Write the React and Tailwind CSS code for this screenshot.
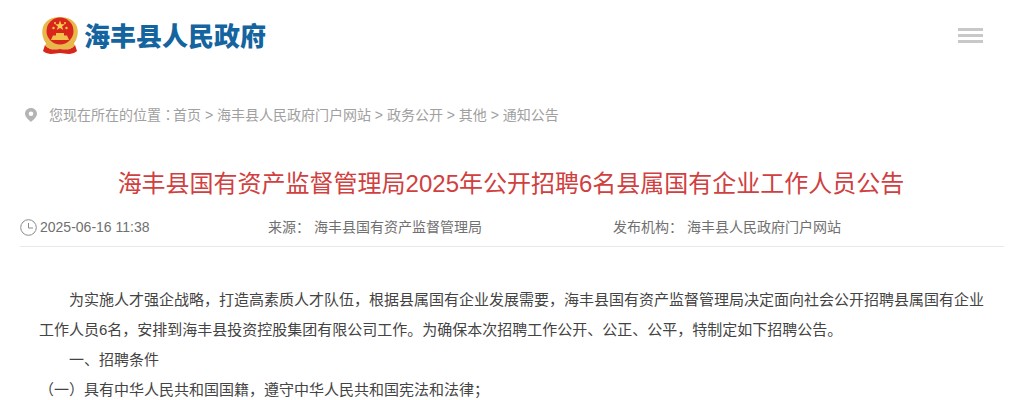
import React from "react";

const cjk = '"Liberation Sans", "Noto Sans CJK SC", sans-serif';

const Emblem = () => (
  <svg width="36" height="40" viewBox="0 0 36 40" className="shrink-0">
    <path d="M7 31 C1 25 -1 18 1 11 C3 5 9 1 18 1 C27 1 33 5 35 11 C37 18 35 25 29 31 Z" fill="#e8b84a" />
    <circle cx="18" cy="15" r="13.5" fill="#d8261c" />
    <path d="M18 4.5 L19.3 8.2 L23 8.2 L20 10.5 L21.2 14 L18 11.9 L14.8 14 L16 10.5 L13 8.2 L16.7 8.2 Z" fill="#f6d04d" />
    <circle cx="11.5" cy="12" r="1.2" fill="#f6d04d" />
    <circle cx="24.5" cy="12" r="1.2" fill="#f6d04d" />
    <circle cx="13" cy="7" r="1" fill="#f6d04d" />
    <circle cx="23" cy="7" r="1" fill="#f6d04d" />
    <path d="M9 24 L11 19.5 H14 V17 H22 V19.5 H25 L27 24 Z" fill="#f0c24a" />
    <path d="M3 29 C8 35 13 33 18 33 C23 33 28 35 33 29 L35 35 C29 40 23 37 18 37 C13 37 7 40 1 35 Z" fill="#d8261c" />
    <path d="M5 27 C9 32 14 30.5 18 30.5 C22 30.5 27 32 31 27 L33 29 C28 35 23 33 18 33 C13 33 8 35 3 29 Z" fill="#e8b84a" />
  </svg>
);

const PinIcon = () => (
  <svg width="12" height="14" viewBox="0 0 12 14" className="shrink-0">
    <path fillRule="evenodd" d="M6 0 C9.4 0 12 2.5 12 5.6 C12 9 8.5 11.8 6 14 C3.5 11.8 0 9 0 5.6 C0 2.5 2.6 0 6 0 Z M6 3.4 A2.3 2.3 0 1 0 6 8 A2.3 2.3 0 1 0 6 3.4 Z" fill="#b4b4b4" />
  </svg>
);

const ClockIcon = () => (
  <svg width="17" height="17" viewBox="0 0 17 17" fill="none" stroke="#8a8a8a" strokeWidth="1" className="shrink-0">
    <circle cx="8.5" cy="8.5" r="7.8" />
    <path d="M8.5 4 V9 H13" />
  </svg>
);

export default function App() {
  return (
    <div className="w-[1024px] h-[400px] overflow-hidden bg-white" style={{ fontFamily: cjk }}>
      {/* Header */}
      <div className="flex items-center justify-between h-[72px] pl-[42px] pr-[41px]">
        <div className="flex items-center gap-[6px]">
          <Emblem />
          <span className="text-[26px] leading-[40px] font-black text-[#14649f] pt-[1px]">海丰县人民政府</span>
        </div>
        <div className="flex flex-col gap-[3px] w-[25px] mt-[-1px]">
          <div className="h-[3px] bg-[#c8c8c8]" />
          <div className="h-[3px] bg-[#c8c8c8]" />
          <div className="h-[3px] bg-[#c8c8c8]" />
        </div>
      </div>

      {/* Breadcrumb */}
      <div className="flex items-center mt-[33px] pl-[25px] h-[20px] text-[14px] text-[#a0a0a0]">
        <PinIcon />
        <span className="ml-[12px]">
          您现在所在的位置<span className="font-['Noto_Sans_CJK_TC'] mr-[-2px]">：</span>首页 &gt; 海丰县人民政府门户网站 &gt; 政务公开 &gt; 其他 &gt; 通知公告
        </span>
      </div>

      {/* Title */}
      <h1 className="mt-[41px] pr-[2px] text-center text-[24px] leading-[36px] font-normal text-[#d04040]">
        海丰县国有资产监督管理局2025年公开招聘6名县属国有企业工作人员公告
      </h1>

      {/* Meta */}
      <div className="flex items-center mx-[20px] mt-[7px] h-[38px] border-b border-[#e8e8e8] text-[14px] text-[#707070]">
        <div className="flex items-center gap-[3px] w-[248px]">
          <ClockIcon />
          <span>2025-06-16 11:38</span>
        </div>
        <div className="w-[345px]">来源：&nbsp;海丰县国有资产监督管理局</div>
        <div>发布机构：&nbsp;海丰县人民政府门户网站</div>
      </div>

      {/* Article */}
      <div className="mt-[38px] pl-[39px] pr-[39px] text-[15px] leading-[30px] text-[#444444]">
        <p className="indent-[30px]">为实施人才强企战略，打造高素质人才队伍，根据县属国有企业发展需要，海丰县国有资产监督管理局决定面向社会公开招聘县属国有企业工作人员6名，安排到海丰县投资控股集团有限公司工作。为确保本次招聘工作公开、公正、公平，特制定如下招聘公告。</p>
        <p className="indent-[30px]">一、招聘条件</p>
        <p>（一）具有中华人民共和国国籍，遵守中华人民共和国宪法和法律；</p>
      </div>
    </div>
  );
}
